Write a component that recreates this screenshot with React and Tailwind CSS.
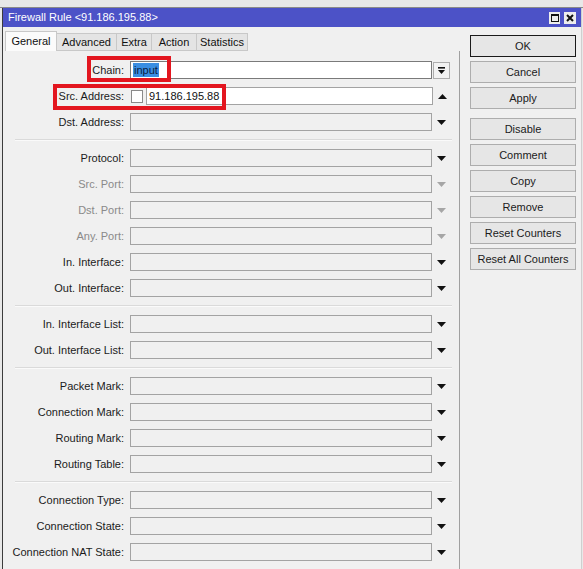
import React from 'react';

const groups = [
    [
        { label: 'Chain:', kind: 'chain' },
        { label: 'Src. Address:', kind: 'src' },
        { label: 'Dst. Address:' },
    ],
    [
        { label: 'Protocol:' },
        { label: 'Src. Port:', dim: true },
        { label: 'Dst. Port:', dim: true },
        { label: 'Any. Port:', dim: true },
        { label: 'In. Interface:' },
        { label: 'Out. Interface:' },
    ],
    [
        { label: 'In. Interface List:' },
        { label: 'Out. Interface List:' },
    ],
    [
        { label: 'Packet Mark:' },
        { label: 'Connection Mark:' },
        { label: 'Routing Mark:' },
        { label: 'Routing Table:' },
    ],
    [
        { label: 'Connection Type:' },
        { label: 'Connection State:' },
        { label: 'Connection NAT State:' },
    ],
];

const tabs = [
    { name: 'General', w: 'w-[52px]' },
    { name: 'Advanced', w: 'w-[60px]' },
    { name: 'Extra', w: 'w-[35px]' },
    { name: 'Action', w: 'w-[45px]' },
    { name: 'Statistics', w: 'w-[51px]' },
];

const Arrow = ({ up, dim }) => (
    <svg width="9" height="5" viewBox="0 0 9 5">
        <polygon points={up ? '0,5 9,5 4.5,0' : '0,0 9,0 4.5,5'} fill={dim ? '#a6a6a6' : '#111'} />
    </svg>
);

const Field = ({ row }) => {
    if (row.kind === 'chain') {
        return (
            <>
                <div className="ml-[6px] flex h-[18px] w-[302px] items-center border border-[#7a7a7a] bg-white pl-[2px]">
                    <span className="bg-[#3a8ee2] px-[1px] leading-[14px] text-[#0b1d40]">input</span>
                </div>
                <div className="ml-[1px] flex h-[17px] w-[17px] items-center justify-center border border-[#adadad] bg-[#f2f2f2]">
                    <svg width="9" height="9" viewBox="0 0 9 9">
                        <rect x="1" y="1" width="7" height="1.6" fill="#111" />
                        <polygon points="1,4 8,4 4.5,8" fill="#111" />
                    </svg>
                </div>
            </>
        );
    }
    if (row.kind === 'src') {
        return (
            <>
                <div className="ml-[7px] h-[13px] w-[12px] border border-[#8a8a8a] bg-white" />
                <div className="ml-[3px] flex h-[18px] w-[287px] items-center border border-[#a3a3a3] bg-white pl-[2px] text-[#111]">
                    91.186.195.88
                </div>
                <div className="flex w-[18px] justify-center">
                    <Arrow up />
                </div>
            </>
        );
    }
    return (
        <>
            <div className="ml-[6px] h-[18px] w-[302px] border border-[#a3a3a3] bg-[#f0f0f0]" />
            <div className="flex w-[18px] justify-center">
                <Arrow dim={row.dim} />
            </div>
        </>
    );
};

const Row = ({ row }) => (
    <div className="flex h-[26px] items-center">
        <div className={row.dim ? 'w-[121px] text-right text-[#8a8a8a]' : 'w-[121px] text-right text-[#1b1b1b]'}>
            {row.label}
        </div>
        <Field row={row} />
    </div>
);

const Btn = ({ children, primary, extra = '' }) => (
    <div
        className={`flex h-[22px] w-[106px] items-center justify-center bg-[#e6e6e6] text-[#1b1b1b] ${
            primary ? 'border border-[#1a1a1a]' : 'border border-[#adadad]'
        } ${extra}`}
    >
        {children}
    </div>
);

export default function App() {
    return (
        <div className="relative h-[569px] w-[583px] overflow-hidden bg-[#e8e8e8] font-['Liberation_Sans',Arial,sans-serif] text-[11px] leading-none">
            <div className="h-[8px] border-b border-[#8a8a8a]" />

            <div className="ml-[2px] mr-[1px] h-[561px] border-l border-r border-l-[#3c3c3c] border-r-[#cfcfcf] bg-[#f0f0f0]">
                {/* title bar */}
                <div className="flex h-[19px] items-center justify-between bg-[#4c52c7] pl-[5px] pr-[5px]">
                    <span className="text-white">Firewall Rule &lt;91.186.195.88&gt;</span>
                    <div className="flex gap-[4px]">
                        <div className="flex h-[12px] w-[11px] items-center justify-center bg-[#ededed]">
                            <div className="h-[8px] w-[8px] border border-t-2 border-[#111]" />
                        </div>
                        <div className="flex h-[12px] w-[12px] items-center justify-center bg-[#ededed]">
                            <svg width="8" height="8" viewBox="0 0 8 8">
                                <path d="M1 1 L7 7 M7 1 L1 7" stroke="#111" strokeWidth="2" />
                            </svg>
                        </div>
                    </div>
                </div>

                <div className="flex">
                    {/* left side: tabs + form */}
                    <div className="w-[457px]">
                        <div className="flex h-[24px] items-end pl-[2px]">
                            {tabs.map((t, i) =>
                                i === 0 ? (
                                    <div
                                        key={t.name}
                                        className={`flex h-[20px] items-center justify-center border border-b-0 border-[#c8c8c8] bg-[#fbfbfb] text-[#111] ${t.w}`}
                                    >
                                        {t.name}
                                    </div>
                                ) : (
                                    <div
                                        key={t.name}
                                        className={`flex h-[18px] items-center justify-center border border-l-0 border-[#c8c8c8] bg-[#e4e4e4] text-[#111] ${t.w}`}
                                    >
                                        {t.name}
                                    </div>
                                )
                            )}
                        </div>

                        <div className="h-[520px] border-r border-[#a0a0a0] pt-[6px]">
                            {groups.map((g, gi) => (
                                <div key={gi}>
                                    {gi > 0 && (
                                        <div className="flex h-[10px] items-center pl-[12px]">
                                            <div className="h-[2px] w-[437px] border-t border-b border-t-[#dadada] border-b-[#fafafa]" />
                                        </div>
                                    )}
                                    {g.map((r) => (
                                        <Row key={r.label} row={r} />
                                    ))}
                                </div>
                            ))}
                        </div>
                    </div>

                    {/* right side: buttons */}
                    <div className="flex flex-col gap-[4px] pl-[10px] pt-[8px]">
                        <Btn primary>OK</Btn>
                        <Btn>Cancel</Btn>
                        <Btn>Apply</Btn>
                        <Btn extra="mt-[5px]">Disable</Btn>
                        <Btn>Comment</Btn>
                        <Btn>Copy</Btn>
                        <Btn>Remove</Btn>
                        <Btn>Reset Counters</Btn>
                        <Btn>Reset All Counters</Btn>
                    </div>
                </div>
            </div>

            {/* red highlight frames */}
            <div className="absolute left-[87px] top-[56px] h-[26px] w-[84px] border-4 border-[#e3161f]" />
            <div className="absolute left-[53px] top-[84px] h-[26px] w-[173px] border-4 border-[#e3161f]" />
        </div>
    );
}
